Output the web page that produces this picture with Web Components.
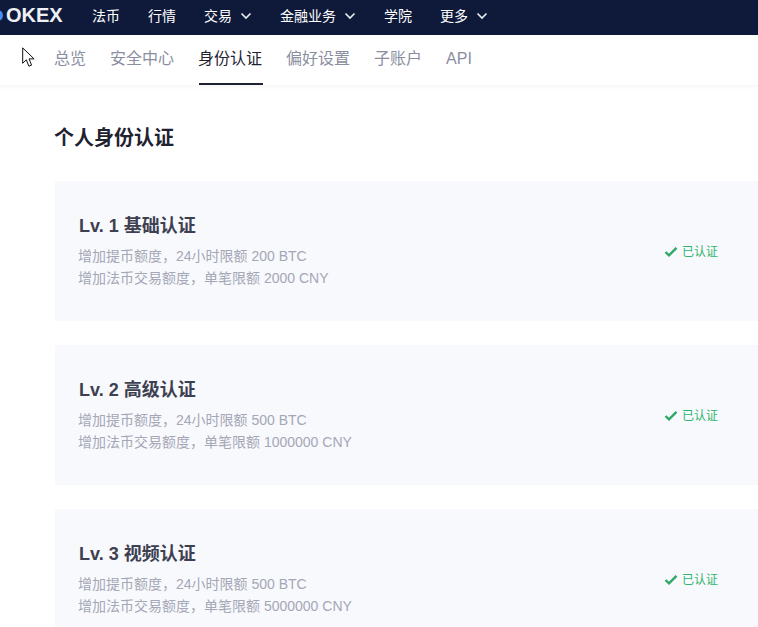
<!DOCTYPE html>
<html lang="zh"><head><meta charset="utf-8"><title>个人身份认证</title>
<style>
html,body{margin:0;padding:0;height:627px;overflow:hidden;background:#fff}
body{font-family:"Liberation Sans","Noto Sans CJK SC",sans-serif}
</style></head><body>
<top-bar>
<nav-item>法币</nav-item><nav-item>行情</nav-item><nav-item menu>交易</nav-item><nav-item menu>金融业务</nav-item><nav-item>学院</nav-item><nav-item menu>更多</nav-item>
</top-bar>
<sub-nav>
<sub-tab>总览</sub-tab><sub-tab>安全中心</sub-tab><sub-tab active>身份认证</sub-tab><sub-tab>偏好设置</sub-tab><sub-tab>子账户</sub-tab><sub-tab>API</sub-tab>
</sub-nav>
<kyc-page heading="个人身份认证">
<kyc-card title="Lv. 1 基础认证" l1="增加提币额度，24小时限额 200 BTC" l2="增加法币交易额度，单笔限额 2000 CNY"></kyc-card>
<kyc-card title="Lv. 2 高级认证" l1="增加提币额度，24小时限额 500 BTC" l2="增加法币交易额度，单笔限额 1000000 CNY"></kyc-card>
<kyc-card title="Lv. 3 视频认证" l1="增加提币额度，24小时限额 500 BTC" l2="增加法币交易额度，单笔限额 5000000 CNY"></kyc-card>
</kyc-page>
<script>
function def(name,html,init){customElements.define(name,class extends HTMLElement{constructor(){super();this.attachShadow({mode:"open"}).innerHTML=html;}connectedCallback(){init&&init(this,this.shadowRoot);}});}
def("top-bar",`<style>
:host{display:flex;align-items:center;height:35px;background:#0f1a3a;color:#fff;overflow:hidden}
.logo{display:flex;align-items:center;width:92px;flex:none;position:relative;padding-left:6px;margin-top:-4px;box-sizing:border-box;font:bold 20px "Liberation Sans",sans-serif;color:#eef0f5;letter-spacing:0}
.dot{position:absolute;left:-8px;top:50%;margin-top:-5.500px;width:11px;height:11px;border-radius:50%;background:#4a8df0}
nav{display:flex;gap:28px}
</style><div class="logo"><span class="dot"></span>OKEX</div><nav><slot></slot></nav>`);
def("nav-item",`<style>
:host{display:flex;align-items:center;gap:8px;font-size:14px;color:#fff;line-height:20px;margin-top:-4px}
svg{display:none;width:12px;height:8px}
:host([menu]) svg{display:block}
</style><slot></slot><svg viewBox="0 0 12 8" fill="none" stroke="#e6e9f0" stroke-width="1.700"><path d="M1.500 1.500 6 6l4.500-4.500"/></svg>`);
def("sub-nav",`<style>
:host{display:flex;gap:24px;height:50px;padding-left:55px;position:relative;background:#fff;box-shadow:0 2px 4px rgba(20,30,60,.04)}
svg{position:absolute;left:22px;top:12px}
</style><svg width="13" height="21" viewBox="0 0 13 21"><path d="M.7.9V16.300L4.300 12.800 6.900 19.200 9.600 18.100 7 11.900H12.100Z" fill="#fff" stroke="#111" stroke-width="1"/></svg><slot></slot>`);
def("sub-tab",`<style>
:host{display:block;height:50px;box-sizing:border-box;font-size:16px;line-height:47px;color:#8a8e9f;text-indent:-1px;padding-right:1px}
:host([active]){color:#1f2230;border-bottom:2px solid #1f2230}
</style><slot></slot>`);
def("kyc-page",`<style>
:host{display:block;padding:0 0 0 55px}
h1{margin:0 0 0 -1px;padding-top:39px;height:57px;font-size:20px;line-height:28px;font-weight:700;color:#1f2230}
.list{display:flex;flex-direction:column;gap:24px}
</style><h1></h1><div class="list"><slot></slot></div>`,(el,s)=>{s.querySelector("h1").textContent=el.getAttribute("heading")});
def("kyc-card",`<style>
:host{display:flex;align-items:center;justify-content:space-between;height:140px;box-sizing:border-box;padding:0 40px 0 24px;background:#f8f9fd}
h2{margin:0 0 6px;font-size:18px;line-height:26px;font-weight:700;color:#3d4050}
p{margin:0 0 0 -1px;font-size:14px;line-height:22px;color:#a4a7b5}
.st{display:flex;align-items:center;gap:4px;font-size:12px;color:#2db56d;line-height:18px;margin-top:2px}
svg{display:block;margin-left:-1px}
</style><div class="main"><h2></h2><p class="a"></p><p class="b"></p></div><div class="st"><svg width="14" height="12" viewBox="0 0 14 12" fill="none" stroke="#2fa866" stroke-width="2.400"><path d="M1.500 6 5 9.300 12.500 1.800"/></svg>已认证</div>`,(el,s)=>{s.querySelector("h2").textContent=el.getAttribute("title");s.querySelector(".a").textContent=el.getAttribute("l1");s.querySelector(".b").textContent=el.getAttribute("l2");});
</script>
</body></html>
